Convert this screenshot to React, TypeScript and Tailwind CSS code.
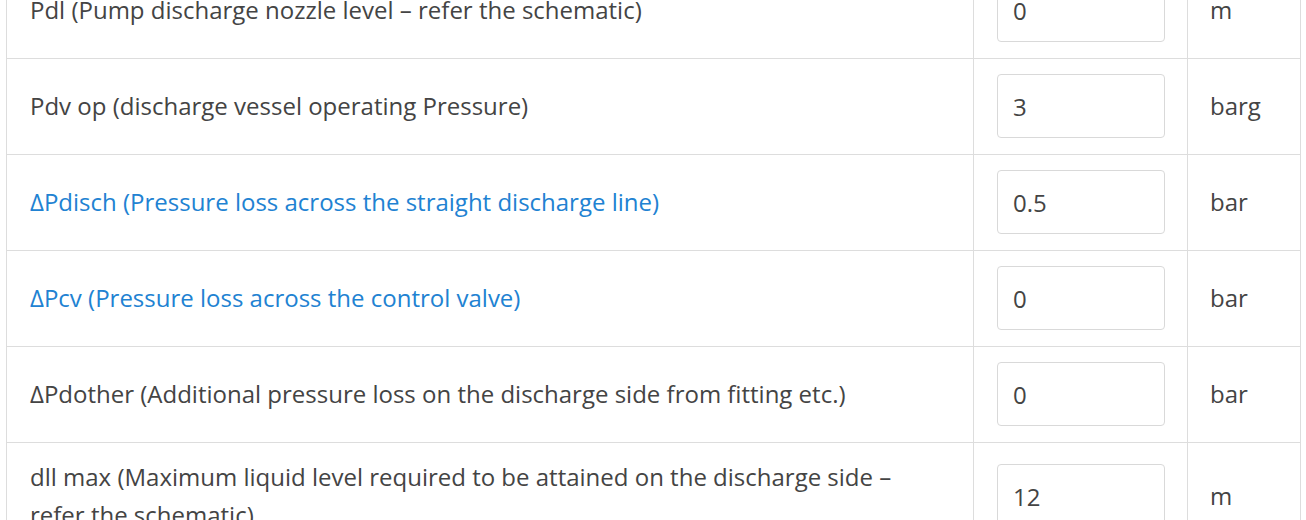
import React from "react";

type Row = { label: string; value: string; unit: string; link?: boolean };

const rows: Row[] = [
  { label: "Pdl (Pump discharge nozzle level – refer the schematic)", value: "0", unit: "m" },
  { label: "Pdv op (discharge vessel operating Pressure)", value: "3", unit: "barg" },
  { label: "ΔPdisch (Pressure loss across the straight discharge line)", value: "0.5", unit: "bar", link: true },
  { label: "ΔPcv (Pressure loss across the control valve)", value: "0", unit: "bar", link: true },
  { label: "ΔPdother (Additional pressure loss on the discharge side from fitting etc.)", value: "0", unit: "bar" },
  { label: "dll max (Maximum liquid level required to be attained on the discharge side – refer the schematic)", value: "12", unit: "m" },
];

export default function App() {
  return (
    <div
      className="w-[1306px] h-[520px] overflow-hidden bg-white"
      style={{ fontFamily: '"Open Sans", "Noto Sans", sans-serif' }}
    >
      <div className="pl-[6px] mt-[-38px]">
        <table className="w-[1294px] border-collapse table-fixed text-[24px] leading-[38px] text-[#444]">
          <colgroup>
            <col className="w-[967px]" />
            <col className="w-[214px]" />
            <col className="w-[113px]" />
          </colgroup>
          <tbody>
            {rows.map((r, i) => (
              <tr key={i}>
                <td className="border border-[#dddddd] px-[23px] pt-[15px] pb-[16px] align-middle">
                  {r.link ? (
                    <a className="text-[#2182d2] cursor-pointer">{r.label}</a>
                  ) : (
                    r.label
                  )}
                </td>
                <td className="border border-[#dddddd] pl-[23px] pr-[22px] pt-[15px] pb-[16px] align-middle">
                  <input
                    readOnly
                    value={r.value}
                    className="block w-full h-[64px] rounded-[4px] border border-[#d9d9d9] px-[15px] text-[24px] text-[#444] bg-white outline-none"
                    style={{ fontFamily: '"Open Sans", "Noto Sans", sans-serif' }}
                  />
                </td>
                <td className="border border-[#dddddd] px-[22px] pt-[15px] pb-[16px] align-middle">
                  {r.unit}
                </td>
              </tr>
            ))}
          </tbody>
        </table>
      </div>
    </div>
  );
}
